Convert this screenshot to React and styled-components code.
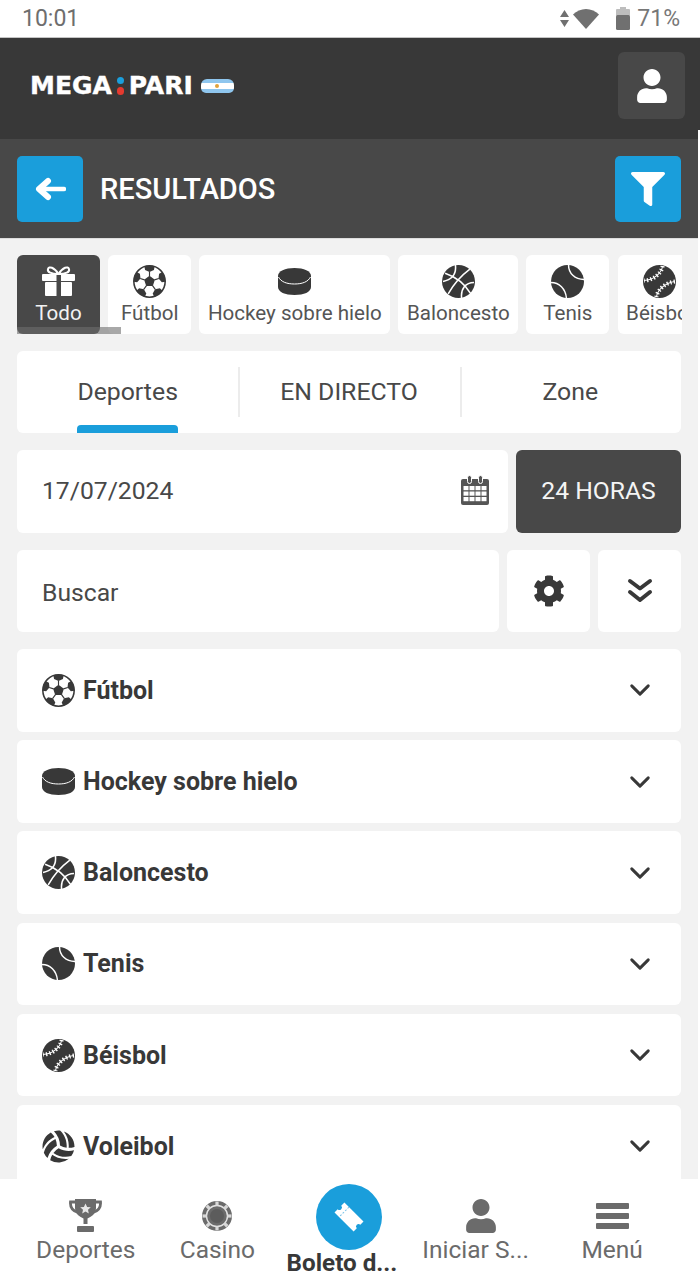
import styled, { createGlobalStyle } from 'styled-components'
import { FaVolleyballBall, FaUser, FaFilter, FaCog } from 'react-icons/fa'

const GlobalStyle = createGlobalStyle`
    * { box-sizing: border-box; }
    html, body { margin: 0; padding: 0; background: #fff; }
    body { font-family: Roboto, "Liberation Sans", sans-serif; }
`

const Page = styled.div`
    width: 700px;
    height: 1280px;
    overflow: hidden;
    position: relative;
    background: #fff;
`

const StatusBar = styled.div`
    height: 38px;
    padding: 0 20px 0 22px;
    background: #fff;
    border-bottom: 1px solid #c4c4c4;
    display: flex;
    align-items: center;
    justify-content: space-between;
    color: #6e6e6e;
    font-size: 23px;
`

const StatusRight = styled.div`
    display: flex;
    align-items: center;
    color: #777;
    svg { display: block; }
`

const StatusItem = styled.span`
    margin-left: ${p => p.$gap}px;
`

const Header = styled.div`
    position: relative;
    height: 101px;
    padding: 14px 15px 0 30px;
    background: #383838;
    display: flex;
    align-items: flex-start;
    justify-content: space-between;

    &::after {
        content: '';
        position: absolute;
        right: 0;
        bottom: 0;
        width: 2px;
        height: 9px;
        background: #fff;
    }
`

const Logo = styled.div`
    height: 67px;
    display: flex;
    align-items: center;
    color: #fff;
    font-family: "DejaVu Sans", sans-serif;
    font-weight: 700;
    font-size: 25px;
    -webkit-text-stroke: .4px #fff;
`

const LogoDots = styled.span`
    width: 8px;
    height: 18px;
    margin: 0 4px 0 5px;
    display: flex;
    flex-direction: column;
    justify-content: space-between;

    i {
        display: block;
        width: 7.5px;
        height: 7.5px;
        border-radius: 50%;
        background: #1b9fdd;
    }
    i:last-child { background: #e53a2f; }
`

const Flag = styled.span`
    width: 33px;
    height: 14px;
    margin-left: 8px;
    border-radius: 6px 6px 5px 5px;
    overflow: hidden;
    background: linear-gradient(#8fc6ee 0 30%, #fff 30% 70%, #8fc6ee 70%);
    display: flex;
    align-items: center;
    justify-content: center;

    i {
        display: block;
        width: 4px;
        height: 4px;
        border-radius: 50%;
        background: #e0a23c;
    }
`

const UserButton = styled.div`
    width: 67px;
    height: 67px;
    border-radius: 6px;
    background: #484848;
    color: #fff;
    display: flex;
    align-items: center;
    justify-content: center;
`

const SubHeader = styled.div`
    width: 698px;
    height: 100px;
    padding: 1px 17px 0;
    background: #484848;
    border-bottom: 1px solid #ddd;
    display: flex;
    align-items: center;
    gap: 17px;
    color: #fff;
`

const BlueButton = styled.div`
    width: 66px;
    height: 66px;
    border-radius: 5px;
    background: #1a9edb;
    color: #fff;
    display: flex;
    align-items: center;
    justify-content: center;
    margin-left: ${p => p.$right ? 'auto' : '0'};
`

const Title = styled.h1`
    margin: 0;
    font-size: 29px;
    font-weight: 500;
`

const Content = styled.div`
    width: 698px;
    height: 941px;
    padding: 16px 17px 0;
    background: #f2f2f2;
    display: flex;
    flex-direction: column;
    gap: 16.8px;
    overflow: hidden;
`

const ChipsScroll = styled.div`
    position: relative;
    flex: 0 0 79px;
    display: flex;
    gap: 8.2px;
    overflow: hidden;
    width: 665px;
`

const ScrollThumb = styled.div`
    position: absolute;
    left: 0;
    bottom: 0;
    width: 104px;
    height: 7px;
    background: rgba(110, 110, 110, .6);
`

const Chip = styled.div`
    flex: 0 0 auto;
    min-width: 83px;
    height: 79px;
    padding: 9px 8.500px 0;
    border-radius: 6px;
    background: ${p => p.$active ? '#484848' : '#fff'};
    color: ${p => p.$active ? '#fff' : '#383838'};
    display: flex;
    flex-direction: column;
    align-items: center;
    font-size: 20.6px;
    line-height: 27px;
    white-space: nowrap;

    span { color: ${p => p.$active ? '#f2f2f2' : '#555'}; }
    svg { display: block; }
`

const ChipIcon = styled.div`
    height: 34px;
    margin-bottom: 2px;
    display: flex;
    align-items: center;
    justify-content: center;
`

const Tabs = styled.div`
    flex: 0 0 82.6px;
    background: #fff;
    border-radius: 6px;
    display: flex;
    overflow: hidden;
`

const Tab = styled.div`
    position: relative;
    flex: 1;
    display: flex;
    align-items: center;
    justify-content: center;
    font-size: 24.8px;
    color: #484848;

    & + &::before {
        content: '';
        position: absolute;
        left: 0;
        top: 16px;
        bottom: 16px;
        width: 2px;
        background: #ececec;
    }
`

const TabLabel = styled.span`
    position: relative;
    height: 100%;
    display: flex;
    align-items: center;
    padding-bottom: 2px;

    &::after {
        content: ${p => p.$active ? "''" : 'none'};
        position: absolute;
        left: 0;
        right: 0;
        bottom: 0;
        height: 8px;
        border-radius: 4px 4px 0 0;
        background: #1a9edb;
    }
`

const ControlRow = styled.div`
    flex: 0 0 82.6px;
    display: flex;
    gap: 8px;
`

const Field = styled.div`
    flex: 1;
    padding: 0 19px 2px 25px;
    background: #fff;
    border-radius: 6px;
    display: flex;
    align-items: center;
    justify-content: space-between;
    font-size: 24.7px;
    color: #484848;
`

const SearchField = styled(Field)`
    padding: 3px 19px 0 25px;
`

const RangeButton = styled.div`
    flex: 0 0 165px;
    padding-bottom: 2px;
    border-radius: 6px;
    background: #484848;
    color: #f4f4f4;
    font-size: 24.7px;
    display: flex;
    align-items: center;
    justify-content: center;
`

const IconButton = styled.div`
    flex: 0 0 83px;
    border-radius: 6px;
    background: #fff;
    color: #383838;
    display: flex;
    align-items: center;
    justify-content: center;
`

const SportList = styled.div`
    display: flex;
    flex-direction: column;
    gap: 8.5px;
`

const SportRow = styled.div`
    flex: 0 0 82.7px;
    height: 82.7px;
    padding: 0 30px 0 25px;
    background: #fff;
    border-radius: 6px;
    display: flex;
    align-items: center;
    gap: 8px;
    color: #383838;
    font-size: 25px;
    font-weight: 700;

    svg { flex: none; display: block; }
    svg:last-child { margin-left: auto; }
`

const BottomNav = styled.nav`
    position: absolute;
    left: 0;
    bottom: 0;
    width: 698px;
    height: 101px;
    padding: 0 20px;
    background: #fff;
    display: flex;
`

const NavItem = styled.div`
    flex: 1;
    padding-top: ${p => p.$main ? '5px' : '18px'};
    display: flex;
    flex-direction: column;
    align-items: center;
    color: #6b6b6b;
    font-size: 24.5px;
    line-height: 28px;

    svg { display: block; }
`

const NavIcon = styled.div`
    height: 37px;
    margin-bottom: 2px;
    display: flex;
    align-items: center;
    justify-content: center;
`

const NavLabel = styled.span`
    margin-right: ${p => p.$shift || 0}px;
    white-space: nowrap;
`

const TicketCircle = styled.div`
    width: 66px;
    height: 66px;
    border-radius: 50%;
    background: #1a9edb;
    display: flex;
    align-items: center;
    justify-content: center;
`

const MainLabel = styled.span`
    margin: -1px 14px 0 0;
    font-size: 24.2px;
    font-weight: 700;
    color: #383838;
    white-space: nowrap;
`

const Ball = ({ size, children }) => (
    <svg width={size} height={size} viewBox="0 0 32 32" fill="none">
        <circle cx="16" cy="16" r="16" fill="currentColor" />
        {children}
    </svg>
)

const FootballIcon = ({ size }) => (
    <svg width={size} height={size} viewBox="0 0 32 32">
        <circle cx="16" cy="16" r="15.200" fill="#fff" stroke="currentColor" strokeWidth="1.500" />
        <path fill="currentColor" d="M16 10.500l5.200 3.800-2 6.100h-6.400l-2-6.100z" />
        {[0, 72, 144, 216, 288].map(a => (
            <g key={a} transform={`rotate(${a} 16 16)`}>
                <path fill="currentColor" d="M11 1.200Q16-.2 21 1.200L20.300 4.800 16 6.800 11.700 4.800z" />
                <path stroke="currentColor" strokeWidth="1.100" d="M16 6.500V11" />
            </g>
        ))}
    </svg>
)

const PuckIcon = ({ size }) => (
    <svg width={size} height={size * 27 / 33} viewBox="0 0 33 27">
        <path fill="currentColor" d="M0 8C0 3 7 0 16.500 0S33 3 33 8V19C33 24 26 27 16.500 27S0 24 0 19Z" />
        <path fill="none" stroke="#fff" strokeWidth="1" d="M.5 9C3 14 9 16 16.500 16S30 14 32.500 9" />
    </svg>
)

const BasketIcon = ({ size }) => (
    <Ball size={size}>
        <g stroke="#fff" strokeWidth="1.500">
            <path d="M3 8C12 11 22 18 28 28" />
            <path d="M27 4C19 10 11 19 6 28" />
            <path d="M13 0C14 8 10 14 1 16" />
            <path d="M31 17C23 17 18 23 19 32" />
        </g>
    </Ball>
)

const TennisIcon = ({ size }) => (
    <Ball size={size}>
        <g stroke="#fff" strokeWidth="1.400">
            <path d="M17 0C17 8 23 14 32 14" />
            <path d="M0 17C8 17 14 23 15 32" />
        </g>
    </Ball>
)

const BaseballIcon = ({ size }) => (
    <Ball size={size}>
        <g stroke="#fff">
            <path strokeWidth="1" d="M19 1C18 8 10 15 1 15" />
            <path strokeWidth="4" strokeDasharray="1.300 2.100" d="M19 1C18 8 10 15 1 15" />
            <path strokeWidth="1" d="M31 16C22 17 14 24 13 31" />
            <path strokeWidth="4" strokeDasharray="1.300 2.100" d="M31 16C22 17 14 24 13 31" />
        </g>
    </Ball>
)

const GiftIcon = ({ size }) => (
    <svg width={size} height={size * 30 / 33} viewBox="0 0 33 30">
        <g fill="none" stroke="#fff" strokeWidth="2">
            <path d="M16.500 8C12 1 7 0 6 3C5 6 9 8 16.500 8" />
            <path d="M16.500 8C21 1 26 0 27 3C28 6 24 8 16.500 8" />
        </g>
        <rect y="8" width="33" height="7" rx="1" fill="#fff" />
        <rect x="3" y="16" width="27" height="14" rx="1" fill="#fff" />
        <rect x="14.500" y="9" width="4.500" height="21" fill="#484848" />
    </svg>
)

const BackArrow = () => (
    <svg width="31" height="24" viewBox="0 0 31 24" fill="none" stroke="#fff" strokeLinecap="round" strokeLinejoin="round">
        <path strokeWidth="4.500" d="M5 12H29" />
        <path strokeWidth="6" d="M13 4L4 12L13 20" />
    </svg>
)

const Chevron = ({ size = 22 }) => (
    <svg width={size} height={size} viewBox="0 0 24 24" fill="none" stroke="#383838" strokeWidth="3.200" strokeLinecap="round" strokeLinejoin="round">
        <path d="M3 7.500l9 9 9-9" />
    </svg>
)

const DoubleChevron = () => (
    <svg width="26" height="26" viewBox="0 0 26 26" fill="none" stroke="#383838" strokeWidth="4" strokeLinecap="round" strokeLinejoin="round">
        <path d="M3 3l10 7.500L23 3" />
        <path d="M3 14l10 8 10-8" />
    </svg>
)

const CalendarIcon = () => (
    <svg width="28" height="30" viewBox="0 0 28 30">
        <rect y="4" width="28" height="26" rx="2" fill="#555" />
        <rect x="6.500" y="0.500" width="4" height="8" rx="2" fill="#555" stroke="#fff" strokeWidth="1" />
        <rect x="17.500" y="0.500" width="4" height="8" rx="2" fill="#555" stroke="#fff" strokeWidth="1" />
        {[11, 16.5, 22].map(y => [2.5, 8.5, 14.5, 20.5].map(x => (
            <rect key={`${x}-${y}`} x={x} y={y} width="5" height="4.200" fill="#fff" />
        )))}
    </svg>
)

const TrophyIcon = () => (
    <svg width="33" height="33" viewBox="0 0 33 33" fill="#6b6b6b">
        <path d="M6 0H27V9C27 15 22 18 18.500 19.500V25H14.500V19.500C11 18 6 15 6 9Z" />
        <path fill="none" stroke="#6b6b6b" strokeWidth="2.800" d="M7 3H1.500C1 9 4 12 9 13.500M26 3H31.500C32 9 29 12 24 13.500" />
        <rect x="8" y="27" width="17" height="6" rx="1" />
        <path fill="#e8e8e8" d="M16.500 4.500l1.600 3.400 3.700.4-2.800 2.500.8 3.700-3.300-1.900-3.300 1.900.8-3.700-2.800-2.500 3.700-.4z" />
    </svg>
)

const CasinoChip = () => (
    <svg width="30" height="30" viewBox="0 0 30 30">
        <circle cx="15" cy="15" r="15" fill="#6b6b6b" />
        <circle cx="15" cy="15" r="10.500" fill="none" stroke="#e4e4e4" strokeWidth="1.400" />
        <circle cx="15" cy="15" r="7" fill="#5c5c5c" />
        {[0, 45, 90, 135, 180, 225, 270, 315].map(a => (
            <rect key={a} x="13.400" y="0.500" width="3.200" height="4" fill="#d8d8d8" transform={`rotate(${a} 15 15)`} />
        ))}
    </svg>
)

const TicketIcon = () => (
    <svg width="40" height="40" viewBox="0 0 40 40">
        <g transform="rotate(45 20 20)">
            <path fill="#fff" d="M6.500 13H33.500V17.500A2.500 2.500 0 0 0 33.500 22.500V27H6.500V22.500A2.500 2.500 0 0 0 6.500 17.500Z" />
            <path stroke="#7cc4e8" strokeWidth="1" strokeDasharray="2 1.500" d="M13 13V27" />
        </g>
    </svg>
)

const MenuIcon = () => (
    <svg width="33" height="26" viewBox="0 0 33 26" fill="#6b6b6b">
        <rect width="33" height="6" rx="1" />
        <rect y="10" width="33" height="6" rx="1" />
        <rect y="20" width="33" height="6" rx="1" />
    </svg>
)

const WifiIcon = () => (
    <svg width="26" height="20" viewBox="0 0 26 20" fill="#707070">
        <path d="M13 20L0 5.500C3.500 2.200 8 0 13 0s9.500 2.200 13 5.500z" />
    </svg>
)

const DataArrows = () => (
    <svg width="9" height="18" viewBox="0 0 9 18" fill="#707070">
        <path d="M4.500 0L9 7H0zM0 10h9l-4.500 7z" />
    </svg>
)

const BatteryIcon = () => (
    <svg width="14" height="23" viewBox="0 0 14 23">
        <rect x="4" width="6" height="3" fill="#bdbdbd" />
        <rect y="2" width="14" height="7" rx="1" fill="#bdbdbd" />
        <rect y="8" width="14" height="15" rx="1.500" fill="#707070" />
    </svg>
)

const chips = [
    { name: 'Fútbol', Icon: FootballIcon },
    { name: 'Hockey sobre hielo', Icon: PuckIcon },
    { name: 'Baloncesto', Icon: BasketIcon },
    { name: 'Tenis', Icon: TennisIcon },
    { name: 'Béisbol', Icon: BaseballIcon },
]

const sports = [...chips, { name: 'Voleibol', Icon: FaVolleyballBall }]

const App = () => {
    return (
        <Page>
            <GlobalStyle />
            <StatusBar>
                <span>10:01</span>
                <StatusRight>
                    <DataArrows />
                    <StatusItem $gap={4}><WifiIcon /></StatusItem>
                    <StatusItem $gap={17}><BatteryIcon /></StatusItem>
                    <StatusItem $gap={7}>71%</StatusItem>
                </StatusRight>
            </StatusBar>

            <Header>
                <Logo>
                    MEGA
                    <LogoDots><i /><i /></LogoDots>
                    PARI
                    <Flag><i /></Flag>
                </Logo>
                <UserButton><FaUser size={34} /></UserButton>
            </Header>

            <SubHeader>
                <BlueButton><BackArrow /></BlueButton>
                <Title>RESULTADOS</Title>
                <BlueButton $right><FaFilter size={34} /></BlueButton>
            </SubHeader>

            <Content>
                <ChipsScroll>
                    <Chip $active>
                        <ChipIcon><GiftIcon size={33} /></ChipIcon>
                        <span>Todo</span>
                    </Chip>
                    {chips.map(({ name, Icon }) => (
                        <Chip key={name}>
                            <ChipIcon><Icon size={33} /></ChipIcon>
                            <span>{name}</span>
                        </Chip>
                    ))}
                    <ScrollThumb />
                </ChipsScroll>

                <Tabs>
                    <Tab><TabLabel $active>Deportes</TabLabel></Tab>
                    <Tab><TabLabel>EN DIRECTO</TabLabel></Tab>
                    <Tab><TabLabel>Zone</TabLabel></Tab>
                </Tabs>

                <ControlRow>
                    <Field>
                        17/07/2024
                        <CalendarIcon />
                    </Field>
                    <RangeButton>24 HORAS</RangeButton>
                </ControlRow>

                <ControlRow>
                    <SearchField>Buscar</SearchField>
                    <IconButton><FaCog size={32} /></IconButton>
                    <IconButton><DoubleChevron /></IconButton>
                </ControlRow>

                <SportList>
                    {sports.map(({ name, Icon }) => (
                        <SportRow key={name}>
                            <Icon size={33} />
                            {name}
                            <Chevron />
                        </SportRow>
                    ))}
                </SportList>
            </Content>

            <BottomNav>
                <NavItem>
                    <NavIcon><TrophyIcon /></NavIcon>
                    <NavLabel>Deportes</NavLabel>
                </NavItem>
                <NavItem>
                    <NavIcon><CasinoChip /></NavIcon>
                    <NavLabel>Casino</NavLabel>
                </NavItem>
                <NavItem $main>
                    <TicketCircle><TicketIcon /></TicketCircle>
                    <MainLabel>Boleto d...</MainLabel>
                </NavItem>
                <NavItem>
                    <NavIcon><FaUser size={34} color="#6b6b6b" /></NavIcon>
                    <NavLabel $shift={10}>Iniciar S...</NavLabel>
                </NavItem>
                <NavItem>
                    <NavIcon><MenuIcon /></NavIcon>
                    <NavLabel>Menú</NavLabel>
                </NavItem>
            </BottomNav>
        </Page>
    )
}

export default App
